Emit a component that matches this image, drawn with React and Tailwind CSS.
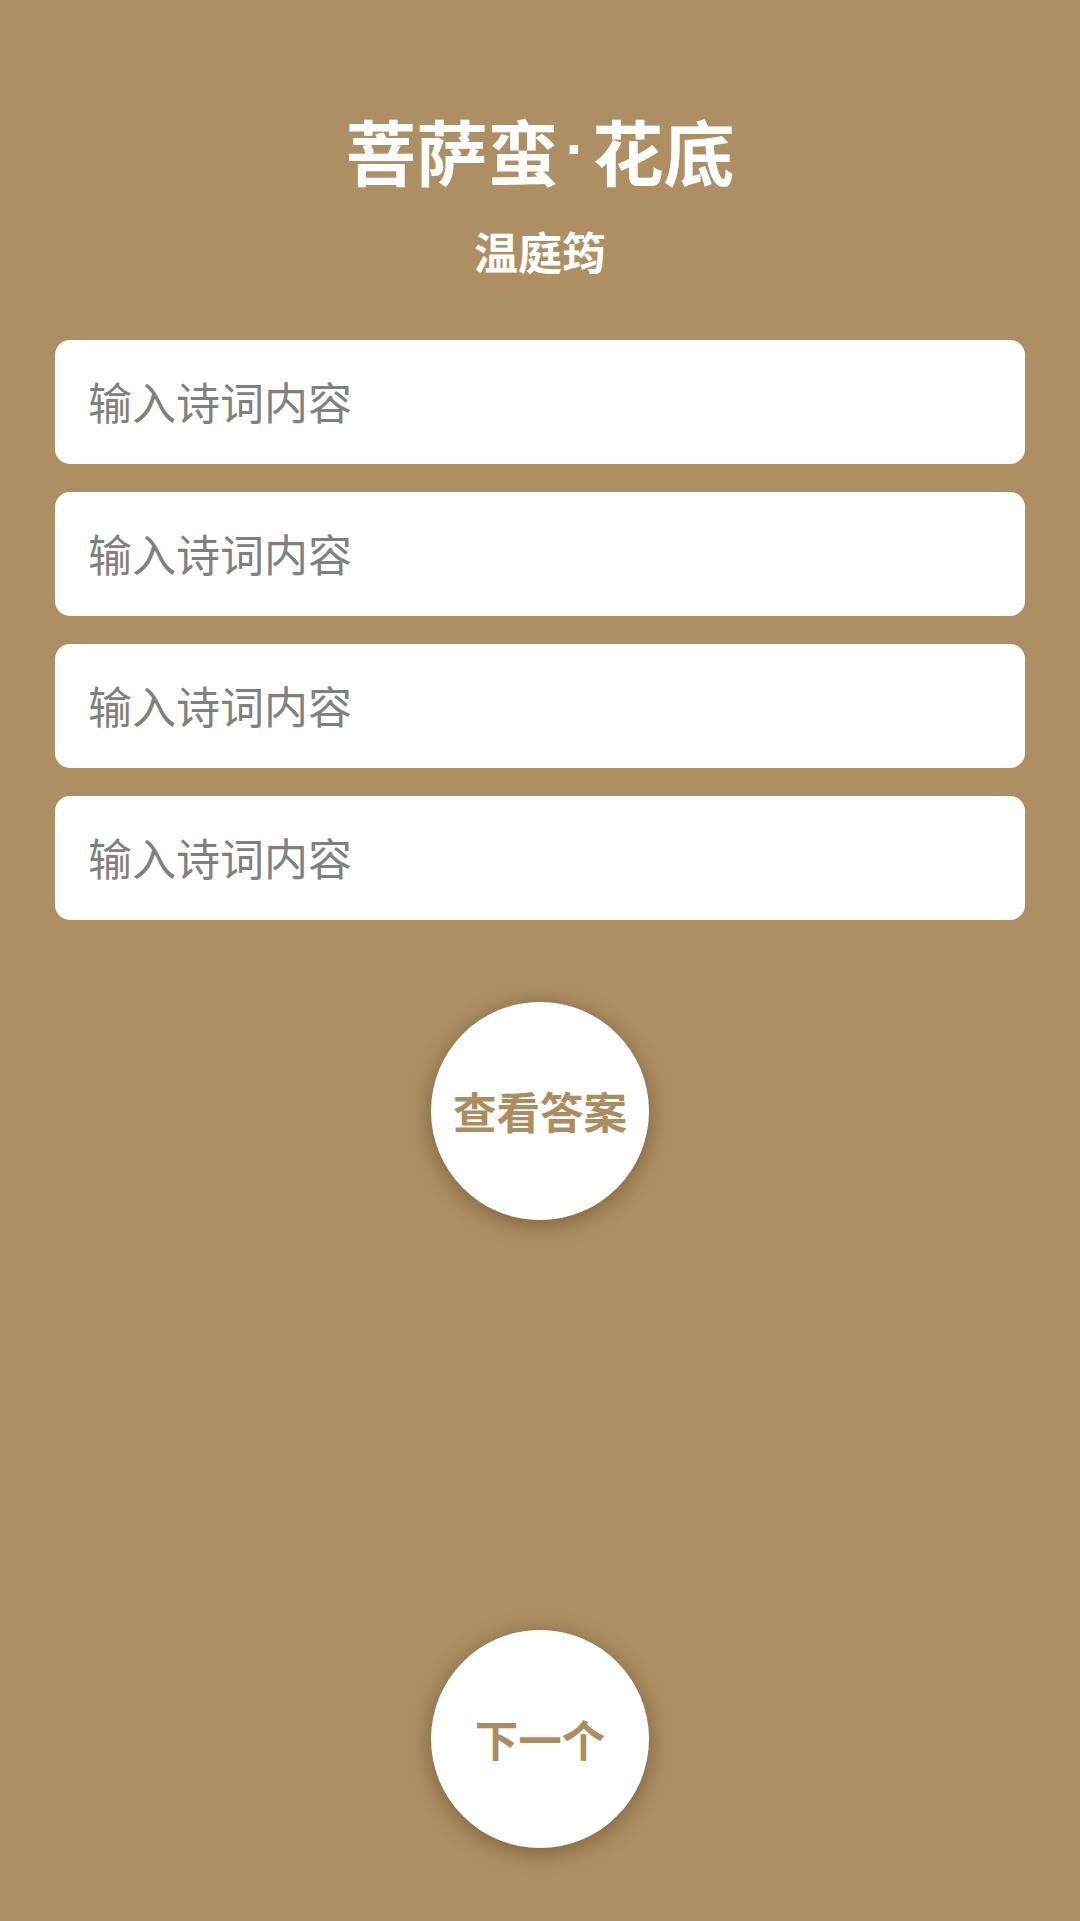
import React from "react";

export default function App() {
  return (
    <div className="min-h-screen w-full bg-[#ae8f63] flex flex-col items-center px-[55px] font-['Noto_Sans_CJK_SC','Noto_Sans',sans-serif]">
      <h1 className="mt-[113px] text-[71px] leading-[72px] font-bold text-white flex items-center">
        <span>菩萨蛮</span>
        <span className="mx-[7px] text-[60px] font-['Liberation_Sans',Arial,sans-serif]">·</span>
        <span>花底</span>
      </h1>
      <div className="mt-[44px] text-[44px] leading-[45px] font-bold text-white">
        温庭筠
      </div>
      <div className="mt-[66px] w-full flex flex-col gap-[28px]">
        {[0, 1, 2, 3].map((i) => (
          <input
            key={i}
            type="text"
            placeholder="输入诗词内容"
            className="w-full h-[124px] rounded-[15px] bg-white pl-[33px] pb-[3px] text-[44px] text-[#333] placeholder:text-[#808080] outline-none border-0"
          />
        ))}
      </div>
      <button className="mt-[82px] w-[218px] h-[218px] rounded-full bg-white flex items-center justify-center text-[43.5px] font-bold text-[#ad8c60] shadow-[0_4px_22px_rgba(60,40,10,0.45)]">
        查看答案
      </button>
      <button className="mt-auto mb-[73px] w-[218px] h-[218px] rounded-full bg-white flex items-center justify-center text-[43.5px] font-bold text-[#ad8c60] shadow-[0_4px_22px_rgba(60,40,10,0.45)]">
        下一个
      </button>
    </div>
  );
}
